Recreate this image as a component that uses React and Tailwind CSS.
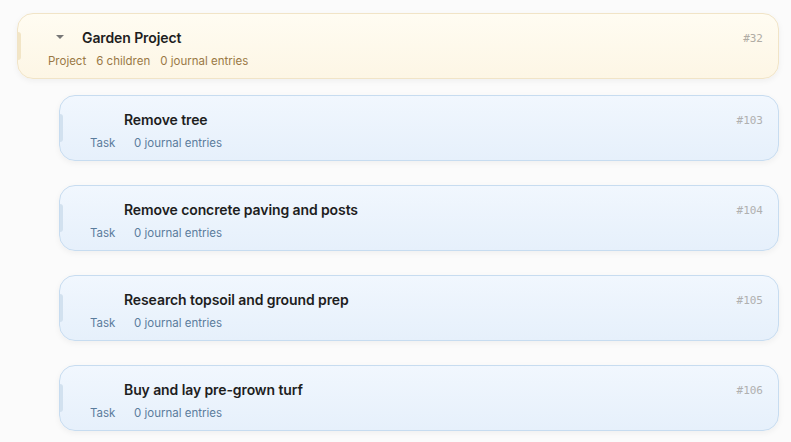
import React from "react";

const project = {
  id: 32,
  title: "Garden Project",
  children: 6,
  journal: 0,
};

const tasks = [
  { id: 103, title: "Remove tree" },
  { id: 104, title: "Remove concrete paving and posts" },
  { id: 105, title: "Research topsoil and ground prep" },
  { id: 106, title: "Buy and lay pre-grown turf" },
];

const font = { fontFamily: "Inter, 'Noto Sans', sans-serif" };

const ProjectCard = ({ item }) => (
  <div className="relative h-[66px] rounded-2xl border border-[#f1e4c7] bg-gradient-to-b from-[#fffcf2] to-[#fdf6e5] shadow-[0_2px_6px_rgba(0,0,0,0.05)]">
    {/* left accent */}
    <div className="absolute left-0 top-[18px] h-[28px] w-[3px] rounded-r bg-[#f2e5c6]" />
    <div className="flex items-start justify-between pl-[30px] pr-[15px] pt-[13px]">
      <div>
        <div className="flex h-[20px] items-center">
          <div className="flex w-[34px] justify-start pl-[8px]">
            <div className="h-0 w-0 border-x-[4px] border-t-[4px] border-x-transparent border-t-[#777]" />
          </div>
          <span className="text-[14px] font-semibold tracking-[-0.1px] text-[#1e1e1e]">{item.title}</span>
        </div>
        <div className="mt-[6px] flex gap-[10px] text-[11.5px] text-[#9a7845]">
          <span>Project</span>
          <span>{item.children} children</span>
          <span>{item.journal} journal entries</span>
        </div>
      </div>
      <span className="mt-[4px] font-['DejaVu_Sans_Mono',monospace] text-[11px] text-[#b0aca4]">
        #{item.id}
      </span>
    </div>
  </div>
);

const TaskCard = ({ item }) => (
  <div className="relative h-[66px] rounded-2xl border border-[#c7dcf0] bg-gradient-to-b from-[#f1f7fe] to-[#e6f0fb] shadow-[0_2px_6px_rgba(0,0,0,0.05)]">
    <div className="absolute left-0 top-[18px] h-[28px] w-[3px] rounded-r bg-[#d2e1ef]" />
    <div className="flex items-start justify-between pl-[30px] pr-[15px] pt-[13px]">
      <div>
        <div className="flex h-[20px] items-center">
          <div className="w-[34px]" />
          <span className="text-[14px] font-semibold tracking-[-0.1px] text-[#1e1e1e]">{item.title}</span>
        </div>
        <div className="mt-[6px] flex text-[11.5px] text-[#5b7c9c]">
          <span className="w-[44px]">Task</span>
          <span>0 journal entries</span>
        </div>
      </div>
      <span className="mt-[4px] font-['DejaVu_Sans_Mono',monospace] text-[11px] text-[#b0b0b0]">
        #{item.id}
      </span>
    </div>
  </div>
);

export default function App() {
  return (
    <div className="min-h-screen bg-[#fbfbfb] pl-[17px] pr-[12px] pt-[13px]" style={font}>
      <ProjectCard item={project} />
      <div className="mt-[16px] flex flex-col gap-[24px] pl-[42px]">
        {tasks.map((t) => (
          <TaskCard key={t.id} item={t} />
        ))}
      </div>
    </div>
  );
}
